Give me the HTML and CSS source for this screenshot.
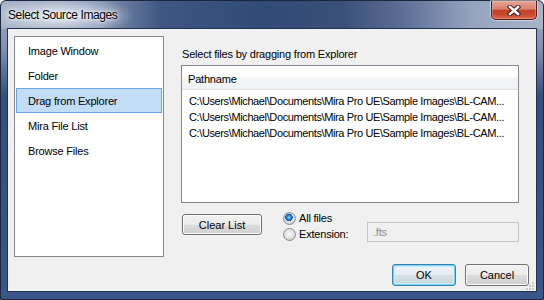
FILE: index.html
```html
<!DOCTYPE html>
<html lang="en">
<head>
    <meta charset="UTF-8">
    <title>Select Source Images</title>
    <link rel="stylesheet" href="styles.css">
</head>
<body>
    <div class="window">
        <div class="titlebar">
            <span class="title">Select Source Images</span>
            <button class="close">
                <svg width="14" height="11" viewBox="0 0 14 11">
                    <path d="M3 2 L11 9 M11 2 L3 9" stroke="#3b1a18" stroke-width="4.4" stroke-linecap="square"/>
                    <path d="M3 2 L11 9 M11 2 L3 9" stroke="#fff" stroke-width="2.6" stroke-linecap="square"/>
                </svg>
            </button>
        </div>
        <div class="client">
            <div class="main">
                <ul class="sources">
                    <li>Image Window</li>
                    <li>Folder</li>
                    <li class="selected">Drag from Explorer</li>
                    <li>Mira File List</li>
                    <li>Browse Files</li>
                </ul>
                <div class="pane">
                    <p class="hint">Select files by dragging from Explorer</p>
                    <div class="listview">
                        <div class="lv-header">Pathname</div>
                        <div class="lv-rows">
                            <div class="lv-row">C:\Users\Michael\Documents\Mira Pro UE\Sample Images\BL-CAM...</div>
                            <div class="lv-row">C:\Users\Michael\Documents\Mira Pro UE\Sample Images\BL-CAM...</div>
                            <div class="lv-row">C:\Users\Michael\Documents\Mira Pro UE\Sample Images\BL-CAM...</div>
                        </div>
                    </div>
                    <div class="options">
                        <button class="btn clear">Clear List</button>
                        <div class="radios">
                            <label class="radio-row"><span class="radio checked"></span>All files</label>
                            <label class="radio-row"><span class="radio"></span>Extension:</label>
                        </div>
                        <div class="ext">.fts</div>
                    </div>
                </div>
            </div>
            <div class="footer">
                <button class="btn default">OK</button>
                <button class="btn">Cancel</button>
            </div>
            <svg class="grip" width="8" height="8" viewBox="0 0 8 8">
                <rect x="6" y="0" width="2" height="2" fill="#c9c9c9"/>
                <rect x="3" y="3" width="2" height="2" fill="#c9c9c9"/>
                <rect x="6" y="3" width="2" height="2" fill="#c9c9c9"/>
                <rect x="0" y="6" width="2" height="2" fill="#c9c9c9"/>
                <rect x="3" y="6" width="2" height="2" fill="#c9c9c9"/>
                <rect x="6" y="6" width="2" height="2" fill="#c9c9c9"/>
            </svg>
        </div>
    </div>
</body>
</html>
```

FILE: styles.css
```css
* {
    margin: 0;
    padding: 0;
    box-sizing: border-box;
}
body {
    width: 544px;
    height: 300px;
    background: #fff;
    font: 11px "Liberation Sans", Arial, sans-serif;
    letter-spacing: -0.2px;
    color: #000;
}
.window {
    height: 300px;
    display: flex;
    flex-direction: column;
    border: 1px solid #1c283e;
    border-radius: 6px 6px 0 0;
    padding: 0 6px 7px;
    background:
        radial-gradient(ellipse 74px 20px at 60px 15px, rgba(255,255,255,0.8), rgba(255,255,255,0)) 0 0 / 100% 28px no-repeat,
        linear-gradient(90deg, #a4b2c8 0, #8192b1 100px, #3f5683 160px, #324a78 260px, #3a4f78 340px, #5a6d94 400px, #95a3bd 470px, #a8b3c7 100%) 0 0 / 100% 28px no-repeat,
        linear-gradient(180deg, #97a5be 0, #8595b1 45px, #344e7e 95px, #3a5588 100%);
}

/* title bar */
.titlebar {
    height: 27px;
    display: flex;
    align-items: flex-start;
}
.title {
    margin: 6px 0 0 1px;
    font-size: 12px;
    letter-spacing: -0.4px;
    line-height: 16px;
    text-shadow: 0 0 6px #fff, 0 0 3px #fff;
}
.close {
    margin-left: auto;
    width: 46px;
    height: 19px;
    display: flex;
    align-items: center;
    justify-content: center;
    border: 1px solid #4e1b18;
    border-top: none;
    border-radius: 0 0 5px 5px;
    background: linear-gradient(180deg, #e4a598 0, #d9806f 45%, #c1412b 52%, #c8472e 75%, #dc6c4f 100%);
    box-shadow: 0 0 0 1px rgba(255,255,255,0.45), inset 0 0 0 1px rgba(255,200,190,0.35);
}

/* client area */
.client {
    flex: 1;
    position: relative;
    display: flex;
    flex-direction: column;
    border: 1px solid #23334f;
    background: #f0f0f0;
    padding: 7px 7px 5px 6px;
}
.main {
    display: flex;
    gap: 17px;
}
.sources {
    width: 150px;
    height: 221px;
    list-style: none;
    background: #fff;
    border: 1px solid #828790;
    padding: 1px 1px 0 1px;
}
.sources li {
    height: 25px;
    line-height: 25px;
    padding-left: 11px;
    border: 1px solid transparent;
}
.sources li.selected {
    background: #c4ddf6;
    border-color: #68a6e9;
}

.pane {
    width: 338px;
    padding-top: 11px;
}
.hint {
    line-height: 14px;
    padding-left: 1px;
}
.listview {
    margin-top: 4px;
    height: 138px;
    background: #fff;
    border: 1px solid #828790;
}
.lv-header {
    height: 24px;
    line-height: 24px;
    padding: 1px 0 0 6px;
    border-bottom: 1px solid #e2e3e5;
    background: linear-gradient(180deg, #fff 0, #fff 45%, #f2f3f5 55%, #f2f3f5 100%);
}
.lv-rows {
    padding-top: 3px;
}
.lv-row {
    height: 16px;
    line-height: 16px;
    padding-left: 7px;
    letter-spacing: -0.38px;
    white-space: nowrap;
}

.options {
    display: flex;
    align-items: flex-end;
    margin-top: 7px;
}
.btn {
    font: inherit;
    color: #000;
    width: 64px;
    height: 22px;
    border: 1px solid #707070;
    border-radius: 3px;
    background: linear-gradient(180deg, #f2f2f2 0, #ebebeb 50%, #dddddd 51%, #cfcfcf 100%);
    box-shadow: inset 0 0 0 1px #fcfcfc;
}
.btn.clear {
    width: 80px;
    height: 21px;
    margin-left: 1px;
    align-self: flex-start;
    margin-top: 4px;
}
.btn.default {
    border-color: #3c7fb1;
    background: linear-gradient(180deg, #eef3f6 0, #e6edf1 50%, #d6e0e6 51%, #cbd6dd 100%);
    box-shadow: inset 0 0 0 1px #7fd2f8, inset 0 0 0 2px #c9ecfb;
}
.radios {
    width: 84px;
    margin-left: 21px;
}
.radio-row {
    height: 16px;
    display: flex;
    align-items: center;
    gap: 3px;
}
.radio {
    width: 13px;
    height: 13px;
    border-radius: 50%;
    border: 1px solid #8e8f8f;
    background: radial-gradient(circle at 50% 45%, #f7f7f7 0, #e4e4e4 4px, #cfcfcf 6px);
}
.radio.checked {
    background:
        radial-gradient(circle at 45% 40%, #a8dcff 0, #2b87dc 2px, #0c4f99 3.5px, rgba(12,79,153,0) 4px),
        radial-gradient(circle at 50% 45%, #f7f7f7 0, #e4e4e4 4px, #cfcfcf 6px);
}
.ext {
    width: 152px;
    height: 20px;
    line-height: 18px;
    padding-left: 5px;
    border: 1px solid #c4c7ca;
    color: #8d8d8d;
}

.footer {
    margin-top: 7px;
    display: flex;
    justify-content: flex-end;
    gap: 9px;
}
.grip {
    position: absolute;
    right: 2px;
    bottom: 1px;
}
```
